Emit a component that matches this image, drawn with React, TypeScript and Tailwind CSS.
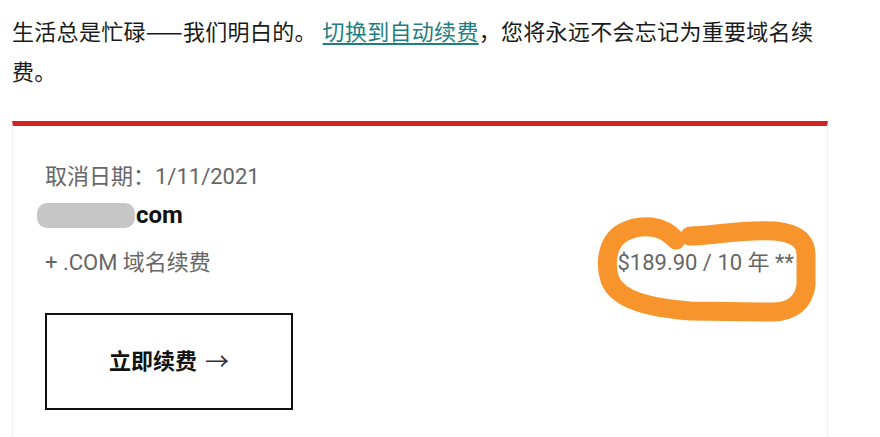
import React from "react";

const font = { fontFamily: 'Roboto, "Noto Sans CJK SC", sans-serif' };
const cjk = { fontFamily: '"Noto Sans CJK SC", sans-serif' };

export default function App() {
  return (
    <div className="w-[880px] h-[437px] bg-white overflow-hidden relative" style={font}>
      <div className="pl-[12px] w-[828px]">
        <p className="pt-[10px] text-[22px] leading-[40px] tracking-[0.3px] text-[#1a1a1a]">
          生活总是忙碌<span style={cjk}>——</span>我们明白的。{" "}
          <a className="text-[#1f7f80] underline underline-offset-[3px] decoration-[1.5px]">切换到自动续费</a>，您将永远不会忘记为重要域名续费。
        </p>
        <div className="mt-[28px] border-t-[5px] border-[#d42222] border-x border-x-[#eeeeee] h-[320px] pl-[32px] pr-[33px] pt-[37px]">
          <div className="text-[22px] leading-[28px] text-[#666666]">取消日期：1/11/2021</div>
          <div className="mt-[10px] flex items-center h-[28px]">
            <div className="-ml-[8px] w-[98px] h-[25px] rounded-[10px] bg-[#c6c6c6]" />
            <span className="ml-[1px] text-[24px] font-bold text-[#111111]">com</span>
          </div>
          <div className="mt-[20px] flex justify-between text-[22px] leading-[28px] text-[#666666]">
            <span>+ .COM 域名续费</span>
            <span>$189.90 / 10 年 **</span>
          </div>
          <button className="mt-[36px] w-[248px] h-[97px] border-2 border-[#111111] flex items-center justify-center text-[22px] font-bold text-[#111111]">
            立即续费 <span className="ml-[8px] font-normal text-[24px] leading-none text-[#333333]">→</span>
          </button>
        </div>
      </div>
      <svg className="absolute left-0 top-0 pointer-events-none" width="880" height="437">
        <path
          d="M 676 240 C 662 224, 640 224, 624 232 C 608 240, 604 262, 610 280 C 618 300, 650 308, 690 311 L 772 312 C 792 312, 804 302, 806 285 L 806 255 C 806 240, 795 233, 775 231 C 740 229, 712 236, 690 236"
          fill="none"
          stroke="#f7952c"
          strokeWidth="19"
          strokeLinecap="round"
          strokeLinejoin="round"
        />
      </svg>
    </div>
  );
}
